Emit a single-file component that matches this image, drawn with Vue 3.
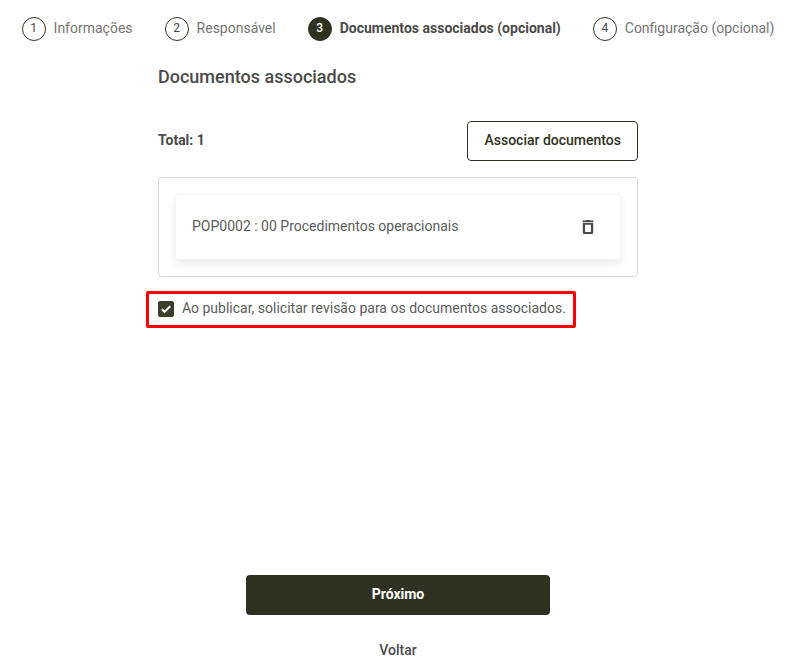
<script setup>
import { ref } from 'vue'

const steps = [
  'Informações',
  'Responsável',
  'Documentos associados (opcional)',
  'Configuração (opcional)',
]
const current = ref(2)
const documents = ref([{ code: 'POP0002', revision: '00', name: 'Procedimentos operacionais' }])
const requestReview = ref(true)

function removeDocument(index) {
  documents.value.splice(index, 1)
}
</script>

<template>
  <div class="page">
    <ol class="steps">
      <li v-for="(step, i) in steps" :key="step" class="step" :class="{ active: i === current }">
        <span class="step-number">{{ i + 1 }}</span>
        <span class="label">{{ step }}</span>
      </li>
    </ol>

    <main class="content">
      <h1 class="title">Documentos associados</h1>

      <div class="toolbar">
        <strong class="label total">Total: {{ documents.length }}</strong>
        <button type="button" class="button outline">Associar documentos</button>
      </div>

      <ul class="documents">
        <li v-for="(doc, i) in documents" :key="doc.code" class="document">
          <span class="label">{{ doc.code }} : {{ doc.revision }} {{ doc.name }}</span>
          <button type="button" class="remove" aria-label="Remover" @click="removeDocument(i)">
            <svg viewBox="0 0 20 20" width="20" height="20" aria-hidden="true">
              <path
                fill="currentColor"
                fill-rule="evenodd"
                d="M8 3h4l.5.600h3V5h-11V3.600h3zM4.800 5.700h10.400v9.800a1.500 1.500 0 0 1-1.500 1.500H6.300a1.500 1.500 0 0 1-1.500-1.500zM7 7.700V15h6V7.700z"
              />
            </svg>
          </button>
        </li>
      </ul>

      <label class="review">
        <span class="check">
          <input v-model="requestReview" type="checkbox" />
          <svg v-if="requestReview" viewBox="0 0 16 16" width="16" height="16" aria-hidden="true">
            <path d="M3.800 8.300 6.500 10.800 12.300 5.300" fill="none" stroke="#fff" stroke-width="2" />
          </svg>
        </span>
        <span class="label">Ao publicar, solicitar revisão para os documentos associados.</span>
      </label>
    </main>

    <footer class="actions">
      <button type="button" class="button primary">Próximo</button>
      <button type="button" class="button plain">Voltar</button>
    </footer>
  </div>
</template>

<style>
body {
  background: #fff;
}
</style>

<style scoped>
.page {
  box-sizing: border-box;
  min-height: 100vh;
  padding: 17px 15px 0 0;
  display: flex;
  flex-direction: column;
  align-items: center;
  font: 14px/20px Roboto, sans-serif;
  color: #5c5c5c;
}

.steps {
  display: flex;
  justify-content: center;
  gap: 32px;
  margin: 0;
  padding: 0;
  list-style: none;
  white-space: nowrap;
}

.step {
  display: flex;
  align-items: center;
  gap: 8px;
  color: #757575;
}

.step-number {
  box-sizing: border-box;
  width: 24px;
  height: 24px;
  border: 1px solid #303221;
  border-radius: 50%;
  font-size: 12px;
  line-height: 21px;
  text-align: center;
  color: #4a4a4a;
}

.label {
  padding-bottom: 2px;
}

.active {
  font-weight: 700;
  color: #4a4a4a;
}

.active .step-number {
  background: #303221;
  font-weight: 500;
  color: #fff;
}

.content {
  box-sizing: border-box;
  width: 100%;
  max-width: 480px;
  padding-top: 24px;
}

.title {
  margin: 0;
  font-size: 18px;
  line-height: 24px;
  font-weight: 500;
  color: #4a4a4a;
}

.toolbar {
  display: flex;
  align-items: center;
  justify-content: space-between;
  margin: 32px 0 16px;
}

.total {
  color: #4a4a4a;
}

.button {
  box-sizing: border-box;
  height: 40px;
  padding: 0 16px 2px;
  border: 1px solid transparent;
  border-radius: 4px;
  background: none;
  font: 500 14px/20px Roboto, sans-serif;
  cursor: pointer;
}

.outline {
  border-color: #303221;
  color: #303221;
}

.documents {
  margin: 0;
  padding: 16px;
  border: 1px solid #d9d9d9;
  border-radius: 4px;
  list-style: none;
}

.document {
  box-sizing: border-box;
  min-height: 66px;
  padding: 0 16px;
  display: flex;
  align-items: center;
  justify-content: space-between;
  border: 1px solid #f5f5f5;
  border-radius: 4px;
  box-shadow: 0 4px 10px rgba(0, 0, 0, 0.08);
}

.remove {
  display: flex;
  padding: 6px;
  border: 0;
  background: none;
  color: #4a4a4a;
  cursor: pointer;
}

.review {
  box-sizing: border-box;
  width: fit-content;
  height: 37px;
  margin: 14px 0 0 -12px;
  padding: 0 7px 2px 9px;
  display: flex;
  align-items: center;
  gap: 8px;
  border: 3px solid #f00;
  border-radius: 2px;
}

.check {
  display: grid;
  width: 16px;
  height: 16px;
}

.check > * {
  grid-area: 1 / 1;
}

.check input {
  appearance: none;
  width: 16px;
  height: 16px;
  margin: 0;
  border: 1px solid #3a4128;
  border-radius: 2px;
}

.check input:checked {
  background: #3a4128;
}

.check svg {
  pointer-events: none;
  z-index: 1;
}

.actions {
  width: 100%;
  max-width: 304px;
  margin-top: auto;
  display: flex;
  flex-direction: column;
  gap: 16px;
}

.primary {
  background: #303221;
  font-weight: 700;
  color: #fff;
}

.plain {
  height: 39px;
  color: #4a4a4a;
}
</style>
